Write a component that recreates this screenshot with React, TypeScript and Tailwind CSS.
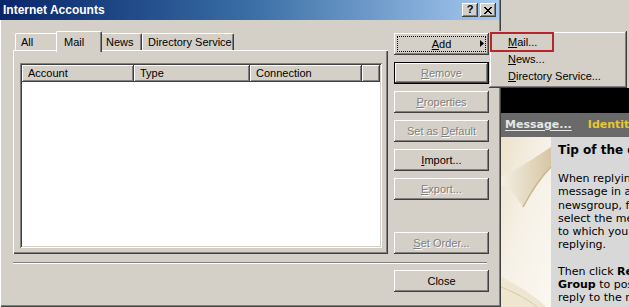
import React from "react";

const raised =
  "shadow-[inset_-1px_-1px_0_#404040,inset_1px_1px_0_#ffffff,inset_-2px_-2px_0_#808080,inset_2px_2px_0_#d4d0c8]";

function Btn({
  children,
  disabled,
  def,
  focus,
  arrow,
}: {
  children: React.ReactNode;
  disabled?: boolean;
  def?: boolean;
  focus?: boolean;
  arrow?: boolean;
}) {
  return (
    <div
      className={
        "relative h-[22px] w-[95px] bg-[#d4d0c8] flex items-center justify-center " +
        (def ? "border border-black " : "") +
        "shadow-[inset_-1px_-1px_0_#404040,inset_1px_1px_0_#ffffff,inset_-2px_-2px_0_#808080,inset_2px_2px_0_#d4d0c8]"
      }
    >
      {focus && (
        <div className="absolute inset-[3px] border border-dotted border-black" />
      )}
      <span
        className={
          disabled
            ? "text-[#808080] [text-shadow:1px_1px_0_#ffffff]"
            : "text-black"
        }
      >
        {children}
      </span>
      {arrow && (
        <svg
          className="absolute right-[5px] top-[7px]"
          width="4"
          height="7"
          viewBox="0 0 4 7"
        >
          <polygon points="0,0 4,3.5 0,7" fill="#000" />
        </svg>
      )}
    </div>
  );
}

function HeaderCell({ w, children }: { w: string; children?: React.ReactNode }) {
  return (
    <div
      className={
        w +
        " h-[17px] shrink-0 flex items-center pl-[6px] bg-[#d4d0c8] shadow-[inset_-1px_-1px_0_#404040,inset_1px_1px_0_#ffffff,inset_-2px_-2px_0_#808080]"
      }
    >
      {children}
    </div>
  );
}

export default function App() {
  return (
    <div className="relative w-[629px] h-[307px] overflow-hidden flex bg-[#d4d0c8] font-['Liberation_Sans',Arial,sans-serif] text-[11px] text-black">
      {/* Dialog */}
      <div className="w-[501px] h-[307px] shrink-0 flex flex-col bg-[#d4d0c8] pr-[2px] pb-[2px] shadow-[inset_1px_0_0_#ffffff,inset_-1px_-1px_0_#404040,inset_-2px_-2px_0_#808080]">
        {/* Title bar */}
        <div className="h-[20px] flex items-center bg-linear-to-r from-[#0a246a] via-[#3a6ea5] to-[#a6caf0] pl-[3px] pr-[3px]">
          <span className="text-white font-bold text-[12px]">
            Internet Accounts
          </span>
          <div className="ml-auto flex gap-[2px]">
            <div className={"w-[16px] h-[14px] bg-[#d4d0c8] flex items-center justify-center " + raised}>
              <span className="font-bold text-[11px] leading-none -mt-[1px]">?</span>
            </div>
            <div className={"w-[16px] h-[14px] bg-[#d4d0c8] flex items-center justify-center " + raised}>
              <svg width="8" height="7" viewBox="0 0 8 7" shapeRendering="crispEdges">
                <path d="M0 0h2v1h-2zM6 0h2v1h-2zM1 1h2v1h-2zM5 1h2v1h-2zM2 2h4v1h-4zM3 3h2v1h-2zM2 4h4v1h-4zM1 5h2v1h-2zM5 5h2v1h-2zM0 6h2v1h-2zM6 6h2v1h-2z" fill="#000" />
              </svg>
            </div>
          </div>
        </div>

        {/* Body */}
        <div className="flex-1 flex flex-col pl-[13px] pt-[11px]">
          <div className="flex gap-[6px]">
            {/* Left: tabs + panel */}
            <div className="w-[375px] flex flex-col">
              <div className="h-[19px] flex items-end pl-[2px]">
                <div className="w-[41px] h-[17px] flex items-center pl-[5px] border-t border-l border-white rounded-tl-[2px]">
                  All
                </div>
                <div className="relative z-10 w-[46px] h-[21px] -mb-[2px] flex items-start pt-[2px] pl-[7px] bg-[#d4d0c8] border-t border-l border-white border-r border-r-[#404040] rounded-t-[2px] shadow-[inset_-1px_0_0_#808080]">
                  Mail
                </div>
                <div className="w-[40px] h-[17px] flex items-center pl-[4px] border-t border-white border-r border-r-[#404040] rounded-tr-[2px] shadow-[inset_-1px_0_0_#808080]">
                  News
                </div>
                <div className="w-[92px] h-[17px] flex items-center pl-[5px] border-t border-l border-white border-r border-r-[#404040] rounded-t-[2px] shadow-[inset_-1px_0_0_#808080]">
                  Directory Service
                </div>
              </div>
              <div className="h-[204px] pt-[13px] pl-[7px] pr-[6px] pb-[6px] bg-[#d4d0c8] shadow-[inset_1px_1px_0_#ffffff,inset_-1px_-1px_0_#404040,inset_-2px_-2px_0_#808080]">
                <div className="h-full bg-white p-[2px] shadow-[inset_1px_1px_0_#808080,inset_-1px_-1px_0_#ffffff,inset_2px_2px_0_#404040,inset_-2px_-2px_0_#d4d0c8]">
                  <div className="flex">
                    <HeaderCell w="w-[112px]">Account</HeaderCell>
                    <HeaderCell w="w-[116px]">Type</HeaderCell>
                    <HeaderCell w="w-[112px]">Connection</HeaderCell>
                    <HeaderCell w="flex-1" />
                  </div>
                </div>
              </div>
            </div>

            {/* Right: buttons */}
            <div className="flex flex-col gap-[7px] pt-[2px]">
              <Btn focus arrow>
                <u>A</u>dd
              </Btn>
              <Btn disabled def>
                <u>R</u>emove
              </Btn>
              <Btn disabled>
                <u>P</u>roperties
              </Btn>
              <Btn disabled>
                Set as <u>D</u>efault
              </Btn>
              <Btn>
                <u>I</u>mport...
              </Btn>
              <Btn disabled>
                <u>E</u>xport...
              </Btn>
              <div className="mt-auto">
                <Btn disabled>
                  <u>S</u>et Order...
                </Btn>
              </div>
            </div>
          </div>

          {/* Separator */}
          <div className="mt-[8px] mr-[12px] h-[2px] border-t border-[#808080] border-b border-b-white" />

          <div className="mt-[6px] pl-[381px]">
            <Btn>Close</Btn>
          </div>
        </div>
      </div>

      {/* Right-side background window */}
      <div className="flex-1 flex flex-col">
        <div className="h-[88px] bg-[#d4d0c8]" />
        <div className="h-[25px] bg-black" />
        <div className="h-[24px] bg-[#6a6a6a] flex items-center pl-[4px] gap-[16px] whitespace-nowrap overflow-hidden font-['DejaVu_Sans',Verdana,sans-serif] font-bold text-[11px]">
          <span className="text-[#e6e6e6] underline underline-offset-[2px]">Message...</span>
          <span className="text-[#e8c830]">Identities</span>
        </div>
        <div className="flex-1 flex">
          <div className="w-[50px] h-full shrink-0 overflow-hidden">
            <svg width="50" height="170" viewBox="0 0 50 170">
              <defs>
                <linearGradient id="pg" x1="0" y1="0" x2="1" y2="1">
                  <stop offset="0" stopColor="#ece2cc" />
                  <stop offset="0.45" stopColor="#f6f1e6" />
                  <stop offset="1" stopColor="#fbf8f2" />
                </linearGradient>
                <linearGradient id="cl" x1="0" y1="0" x2="1" y2="0">
                  <stop offset="0" stopColor="#f4efe4" />
                  <stop offset="1" stopColor="#d6c6a4" />
                </linearGradient>
              </defs>
              <rect width="50" height="170" fill="url(#pg)" />
              <path d="M0 40 C20 30 38 18 50 10 L50 30 C40 40 30 55 22 70 C15 60 8 50 0 48 Z" fill="url(#cl)" />
              <path d="M22 70 C30 55 40 40 50 30" stroke="#c9b48c" strokeWidth="1.5" fill="none" />
              <path d="M0 140 C20 150 35 160 45 170 L0 170 Z" fill="#efe6d2" />
              <path d="M0 150 C15 156 28 163 36 170" stroke="#d8c8a6" strokeWidth="1" fill="none" />
            </svg>
          </div>
          <div className="flex-1 bg-[#d8d8d8] pl-[7px] pt-[6px] overflow-hidden whitespace-nowrap font-['DejaVu_Sans',Verdana,sans-serif] text-[11px] leading-[13.3px] text-black">
            <div className="font-bold text-[12px] leading-[15px]">Tip of the day</div>
            <div className="mt-[14px]">
              When replying to a<br />
              message in a<br />
              newsgroup, first<br />
              select the message<br />
              to which you are<br />
              replying.
            </div>
            <div className="mt-[13px]">
              Then click <b>Reply to</b>
              <br />
              <b>Group</b> to post your
              <br />
              reply to the newsgroup.
            </div>
          </div>
        </div>
      </div>

      {/* Context menu */}
      <div className="absolute left-[489px] top-[31px] w-[138px] h-[57px] bg-[#d4d0c8] pt-[3px] shadow-[inset_-1px_-1px_0_#404040,inset_1px_1px_0_#d4d0c8,inset_-2px_-2px_0_#808080,inset_2px_2px_0_#ffffff]">
        <div className="absolute left-[1px] top-[1px] w-[64px] h-[20px] border-2 border-[#b8252c]" />
        <div className="h-[17px] flex items-center pl-[19px]">
          <span>
            <u>M</u>ail...
          </span>
        </div>
        <div className="h-[17px] flex items-center pl-[19px]">
          <span>
            <u>N</u>ews...
          </span>
        </div>
        <div className="h-[17px] flex items-center pl-[19px]">
          <span>
            <u>D</u>irectory Service...
          </span>
        </div>
      </div>
    </div>
  );
}
